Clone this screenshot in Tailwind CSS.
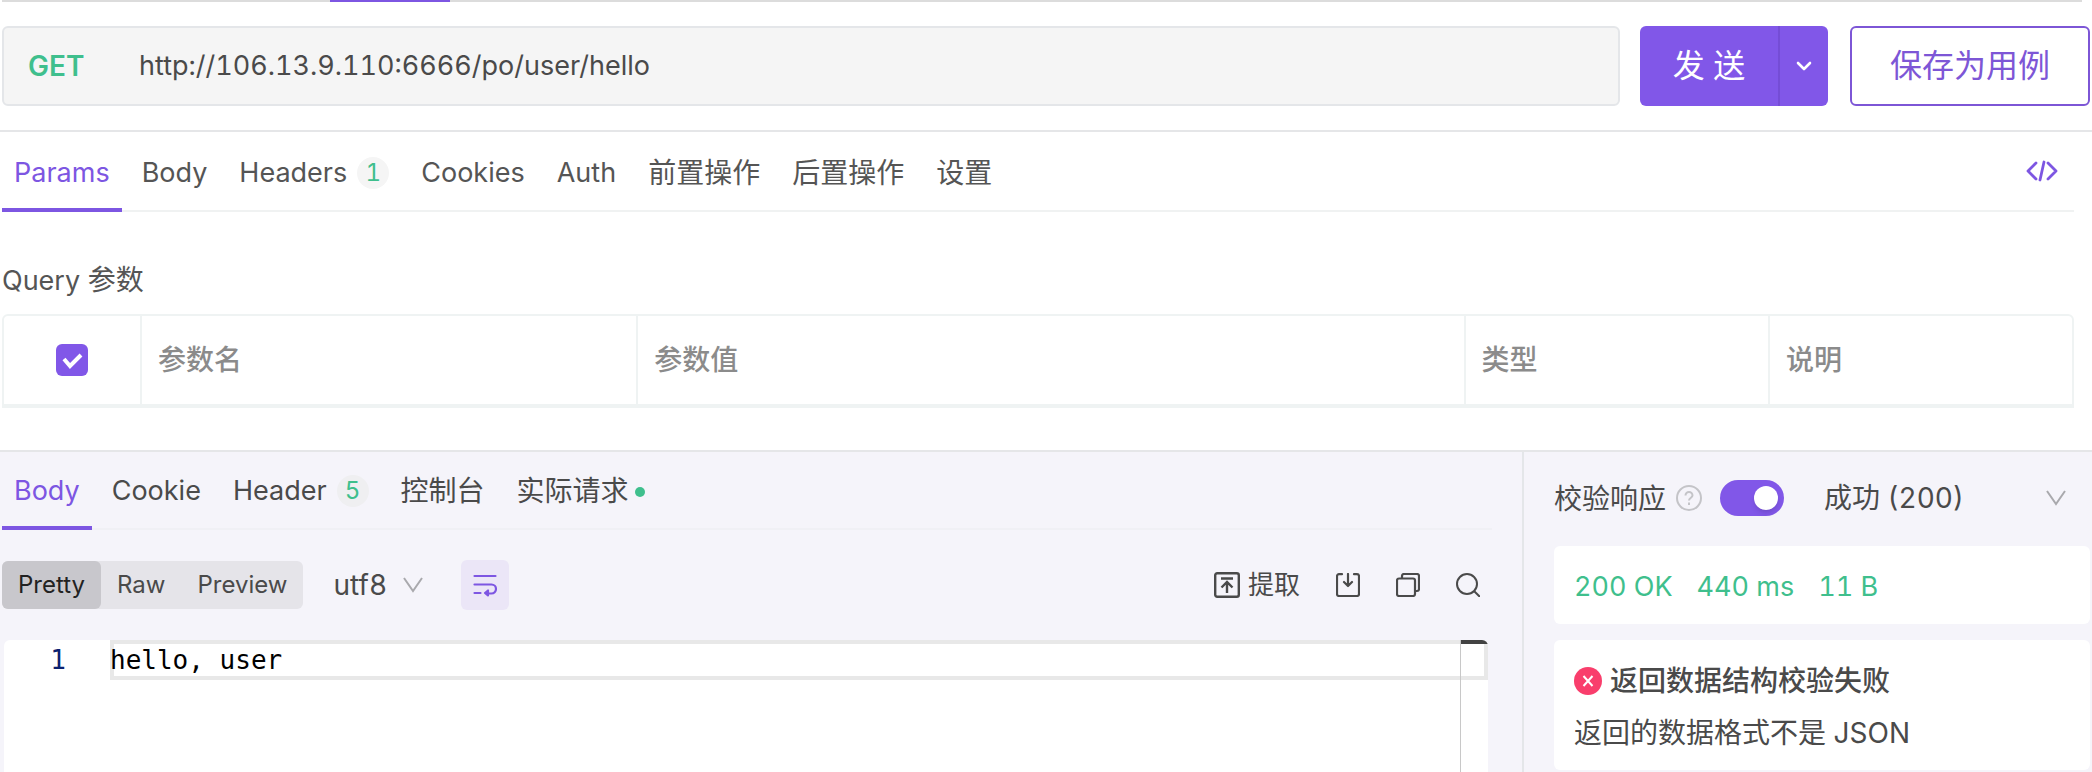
<!DOCTYPE html>
<html lang="zh-CN">
  <head>
    <meta charset="UTF-8" />
    <meta name="viewport" content="width=device-width, initial-scale=1.0" />
    <title>GET /po/user/hello</title>
    <script src="https://cdn.jsdelivr.net/npm/@tailwindcss/browser@4"></script>
  </head>
  <body
    class="min-h-screen flex flex-col overflow-x-hidden bg-white text-[28px] leading-10 text-[#4a4a4a] tabular-nums font-['Inter','Noto_Sans_CJK_SC',sans-serif]"
  >
    <!-- bottom edge of the file tabs -->
    <div class="ml-0.5 mr-2.5 h-0.5 bg-[#dcdcdc]">
      <div class="ml-[328px] w-[120px] h-0.5 bg-[#7d56e2]"></div>
    </div>

    <!-- request line -->
    <form class="flex items-center pl-0.5 pr-0.5 py-6 border-b-2 border-[#e5e6e8]">
      <div
        class="flex-1 flex items-center h-20 mr-5 border-2 border-[#e4e6e9] rounded-md bg-[#f5f5f5]"
      >
        <label for="url" class="w-[135px] pl-6 font-semibold text-[#3fbf8d]">GET</label>
        <input
          id="url"
          type="text"
          value="http://106.13.9.110:6666/po/user/hello"
          class="flex-1 bg-transparent outline-none text-[27px] text-[#4a4a4a]"
        />
      </div>
      <div class="flex h-20 mr-[22px] rounded-md overflow-hidden bg-[#8157e8] text-white">
        <button type="button" class="w-[138px] text-[32px]">发 送</button>
        <button
          type="button"
          aria-label="更多发送选项"
          class="w-[50px] flex items-center justify-center border-l-2 border-[#754dd6]"
        >
          <svg class="w-4 h-4" viewBox="0 0 16 16" fill="none" stroke="currentColor" stroke-width="2.6" stroke-linecap="round" stroke-linejoin="round">
            <path d="M2 5l6 6 6-6" />
          </svg>
        </button>
      </div>
      <button
        type="button"
        class="h-20 w-60 border-2 border-[#7d56d6] rounded-md text-[32px] text-[#7d56d6]"
      >
        保存为用例
      </button>
    </form>

    <!-- request tabs -->
    <nav class="flex h-20 ml-0.5 mr-[18px] border-b-2 border-[#f0f2f2] text-[27px] text-[#555555]">
      <a href="#params" class="h-20 px-3 pt-[21px] border-b-4 border-[#7d56e2] text-[#7d56e2]">Params</a>
      <a href="#body" class="pt-[21px] ml-5">Body</a>
      <a href="#headers" class="flex items-start pt-[21px] ml-8">
        Headers
        <span class="ml-2.5 mt-1 w-8 h-8 rounded-full bg-[#f5f5f5] text-center text-2xl leading-8 text-[#3fbf8d]">1</span>
      </a>
      <a href="#cookies" class="pt-[21px] ml-8">Cookies</a>
      <a href="#auth" class="pt-[21px] ml-8">Auth</a>
      <a href="#pre" class="pt-[21px] ml-8 text-[28px] leading-10">前置操作</a>
      <a href="#post" class="pt-[21px] ml-8 text-[28px] leading-10">后置操作</a>
      <a href="#settings" class="pt-[21px] ml-8 text-[28px] leading-10">设置</a>
      <button type="button" aria-label="代码" class="ml-auto mr-4 text-[#7d56e2]">
        <svg class="w-8 h-6" viewBox="0 0 32 24" fill="none" stroke="currentColor" stroke-width="2.8" stroke-linecap="round" stroke-linejoin="round">
          <path d="M10 4l-8 8 8 8M22 4l8 8-8 8M18 3l-4 18" />
        </svg>
      </button>
    </nav>

    <section class="ml-0.5 mr-[18px] pt-12 pb-[42px]">
      <h2 class="h-10 mb-3.5 text-[#555555]"><span class="text-[27px]">Query</span> 参数</h2>
      <!-- separate borders keep the rounded top corners -->
      <table class="w-full table-fixed border-separate border-spacing-0 border-2 border-b-4 border-[#eff3f3] rounded-t-md text-left text-[#8b8b8b]">
        <thead>
          <tr class="h-[88px]">
            <th class="w-[138px] p-0 border-r-2 border-[#eff3f3]">
              <label class="relative block w-8 h-8 mx-auto">
                <input type="checkbox" checked aria-label="全选" class="block w-8 h-8 appearance-none rounded-md bg-[#8157e8]" />
                <svg class="absolute inset-0 w-8 h-8" viewBox="0 0 32 32" fill="none" stroke="white" stroke-width="4">
                  <path d="M8 15l6 7 11-11" />
                </svg>
              </label>
            </th>
            <th class="w-[24%] pl-4 border-r-2 border-[#eff3f3] font-medium">参数名</th>
            <th class="w-[40%] pl-4 border-r-2 border-[#eff3f3] font-medium">参数值</th>
            <th class="pl-4 border-r-2 border-[#eff3f3] font-medium">类型</th>
            <th class="w-[302px] pl-4 font-medium">说明</th>
          </tr>
        </thead>
      </table>
    </section>

    <!-- response -->
    <div class="flex-1 flex border-t-2 border-[#e5e6e8] bg-[#f5f4fa]">
      <section class="flex-1 min-w-0 flex flex-col border-r-2 border-[#e4e6e9]">
        <nav class="flex h-[78px] ml-0.5 mr-[30px] border-b-2 border-[#f0f0f5] text-[27px]">
          <a href="#res-body" class="h-[78px] px-3 pt-[19px] border-b-4 border-[#7d56e2] text-[#7d56e2]">Body</a>
          <a href="#res-cookie" class="pt-[19px] ml-5">Cookie</a>
          <a href="#res-header" class="flex items-start pt-[19px] ml-8">
            Header
            <span class="ml-2.5 mt-1 w-8 h-8 rounded-full bg-[#efeff1] text-center text-2xl leading-8 text-[#3fbf8d]">5</span>
          </a>
          <a href="#console" class="pt-[19px] ml-8 text-[28px] leading-10">控制台</a>
          <a href="#actual" class="flex items-start pt-[19px] ml-8 text-[28px] leading-10">
            实际请求
            <span class="ml-1.5 mt-4 w-2.5 h-2.5 rounded-full bg-[#3fbf8d]"></span>
          </a>
        </nav>

        <div class="flex items-center h-[110px] pl-0.5 pr-[42px]">
          <div class="flex h-12 rounded-md bg-[#e5e4e9] text-2xl">
            <button type="button" class="px-4 rounded-md bg-[#c8c7cc] text-[#222222]">Pretty</button>
            <button type="button" class="px-4">Raw</button>
            <button type="button" class="px-4">Preview</button>
          </div>
          <div class="relative ml-[30px]">
            <select aria-label="编码" class="w-[90px] appearance-none bg-transparent outline-none">
              <option>utf8</option>
            </select>
            <svg class="absolute right-0 top-3 w-5 h-4 pointer-events-none" viewBox="0 0 20 16" fill="none" stroke="#a9a9ad" stroke-width="2">
              <path d="M1 1l9 13 9-13" />
            </svg>
          </div>
          <button type="button" aria-label="自动换行" class="ml-[38px] w-12 h-[50px] flex items-center justify-center rounded-md bg-[#ebe6f7] text-[#7d56e2]">
            <svg class="w-6 h-6" viewBox="0 0 24 24" fill="none" stroke="currentColor" stroke-width="2.2" stroke-linecap="round" stroke-linejoin="round">
              <path d="M1.500 3h21M1.500 11.500h17a4.500 4.500 0 010 9H14M1.500 20h6" />
              <path d="M15 17.500v5l-3-2.500z" fill="currentColor" />
            </svg>
          </button>
          <div class="ml-auto flex items-center gap-9">
            <button type="button" class="flex items-center gap-2 text-[26px]">
              <svg class="w-[26px] h-[26px]" viewBox="0 0 26 26" fill="none" stroke="currentColor" stroke-width="2.4">
                <rect x="1.2" y="1.2" width="23.6" height="23.6" rx="2" />
                <path d="M7 6.500h12M13 21V10M7.500 15.500L13 10l5.500 5.500" />
              </svg>
              提取
            </button>
            <button type="button" aria-label="下载">
              <svg class="w-6 h-6" viewBox="0 0 24 24" fill="none" stroke="currentColor" stroke-width="2.2" stroke-linecap="round" stroke-linejoin="round">
                <path d="M6 1.200H3a2 2 0 00-2 2V21a2 2 0 002 2h18a2 2 0 002-2V3.200a2 2 0 00-2-2h-3M12 1v11.500M8 9l4 4 4-4" />
              </svg>
            </button>
            <button type="button" aria-label="复制">
              <svg class="w-6 h-6" viewBox="0 0 24 24" fill="none" stroke="currentColor" stroke-width="2.2">
                <rect x="1" y="5.500" width="18" height="17.500" rx="2" />
                <path d="M6 5V3a2 2 0 012-2h13a2 2 0 012 2v13a2 2 0 01-2 2h-2" />
              </svg>
            </button>
            <button type="button" aria-label="搜索">
              <svg class="w-6 h-6" viewBox="0 0 24 24" fill="none" stroke="currentColor" stroke-width="2">
                <circle cx="11" cy="11" r="10" />
                <path d="M18 18l6 6" />
              </svg>
            </button>
          </div>
        </div>

        <!-- code viewer -->
        <div class="flex-1 flex ml-1 mr-[34px] rounded-t-md overflow-hidden bg-white text-black text-[26px] font-['DejaVu_Sans_Mono','Liberation_Mono',monospace]">
          <div class="w-[106px] pr-11 text-right text-[#0b216f]">1</div>
          <div class="relative flex-1">
            <pre class="h-10 shadow-[inset_0_0_0_4px_#e8e8e8] leading-10 font-['DejaVu_Sans_Mono','Liberation_Mono',monospace]">hello, user</pre>
            <div class="absolute top-0 right-0 bottom-0 w-7 border-l border-[#c8c8c8]">
              <div class="h-1 bg-[#424242]"></div>
            </div>
          </div>
        </div>
      </section>

      <aside class="w-[568px] pl-[30px] pr-0.5 pt-[26px]">
        <div class="flex items-center h-10">
          <label for="verify" class="pt-0.5">校验响应</label>
          <svg class="ml-2.5 w-[26px] h-[26px]" viewBox="0 0 26 26" fill="none" stroke="#c4c4c8" stroke-width="2">
            <circle cx="13" cy="13" r="12" />
            <path d="M9.500 10.500a3.500 3.500 0 117 0c0 2.200-3.500 2.300-3.500 5M13 17.500v2.500" />
          </svg>
          <input
            id="verify"
            type="checkbox"
            role="switch"
            checked
            class="ml-[18px] w-16 h-9 appearance-none rounded-full bg-[#8157e8] before:block before:w-6 before:h-6 before:mt-1.5 before:ml-[34px] before:rounded-full before:bg-white before:shadow-md"
          />
          <div class="relative flex-1 ml-10">
            <select aria-label="响应" class="w-full appearance-none bg-transparent outline-none">
              <option>成功 (200)</option>
            </select>
            <svg class="absolute right-6 top-3 w-5 h-4 pointer-events-none" viewBox="0 0 20 16" fill="none" stroke="#a9a9ad" stroke-width="2">
              <path d="M1 1l9 13 9-13" />
            </svg>
          </div>
        </div>
        <div class="flex items-center gap-6 h-[78px] mt-7 pl-5 pt-1 rounded-md bg-white text-[27px] text-[#3fbf8d]">
          <span>200 OK</span>
          <span>440 ms</span>
          <span>11 B</span>
        </div>
        <div class="h-[130px] mt-4 pl-5 pt-[21px] rounded-md bg-white">
          <h3 class="flex items-center gap-2 font-medium">
            <svg class="w-7 h-7" viewBox="0 0 28 28">
              <circle cx="14" cy="14" r="14" fill="#f93e6c" />
              <path d="M9.500 9l9 10M18.500 9l-9 10" stroke="white" stroke-width="2" />
            </svg>
            返回数据结构校验失败
          </h3>
          <p class="mt-3">返回的数据格式不是 JSON</p>
        </div>
      </aside>
    </div>
  </body>
</html>
